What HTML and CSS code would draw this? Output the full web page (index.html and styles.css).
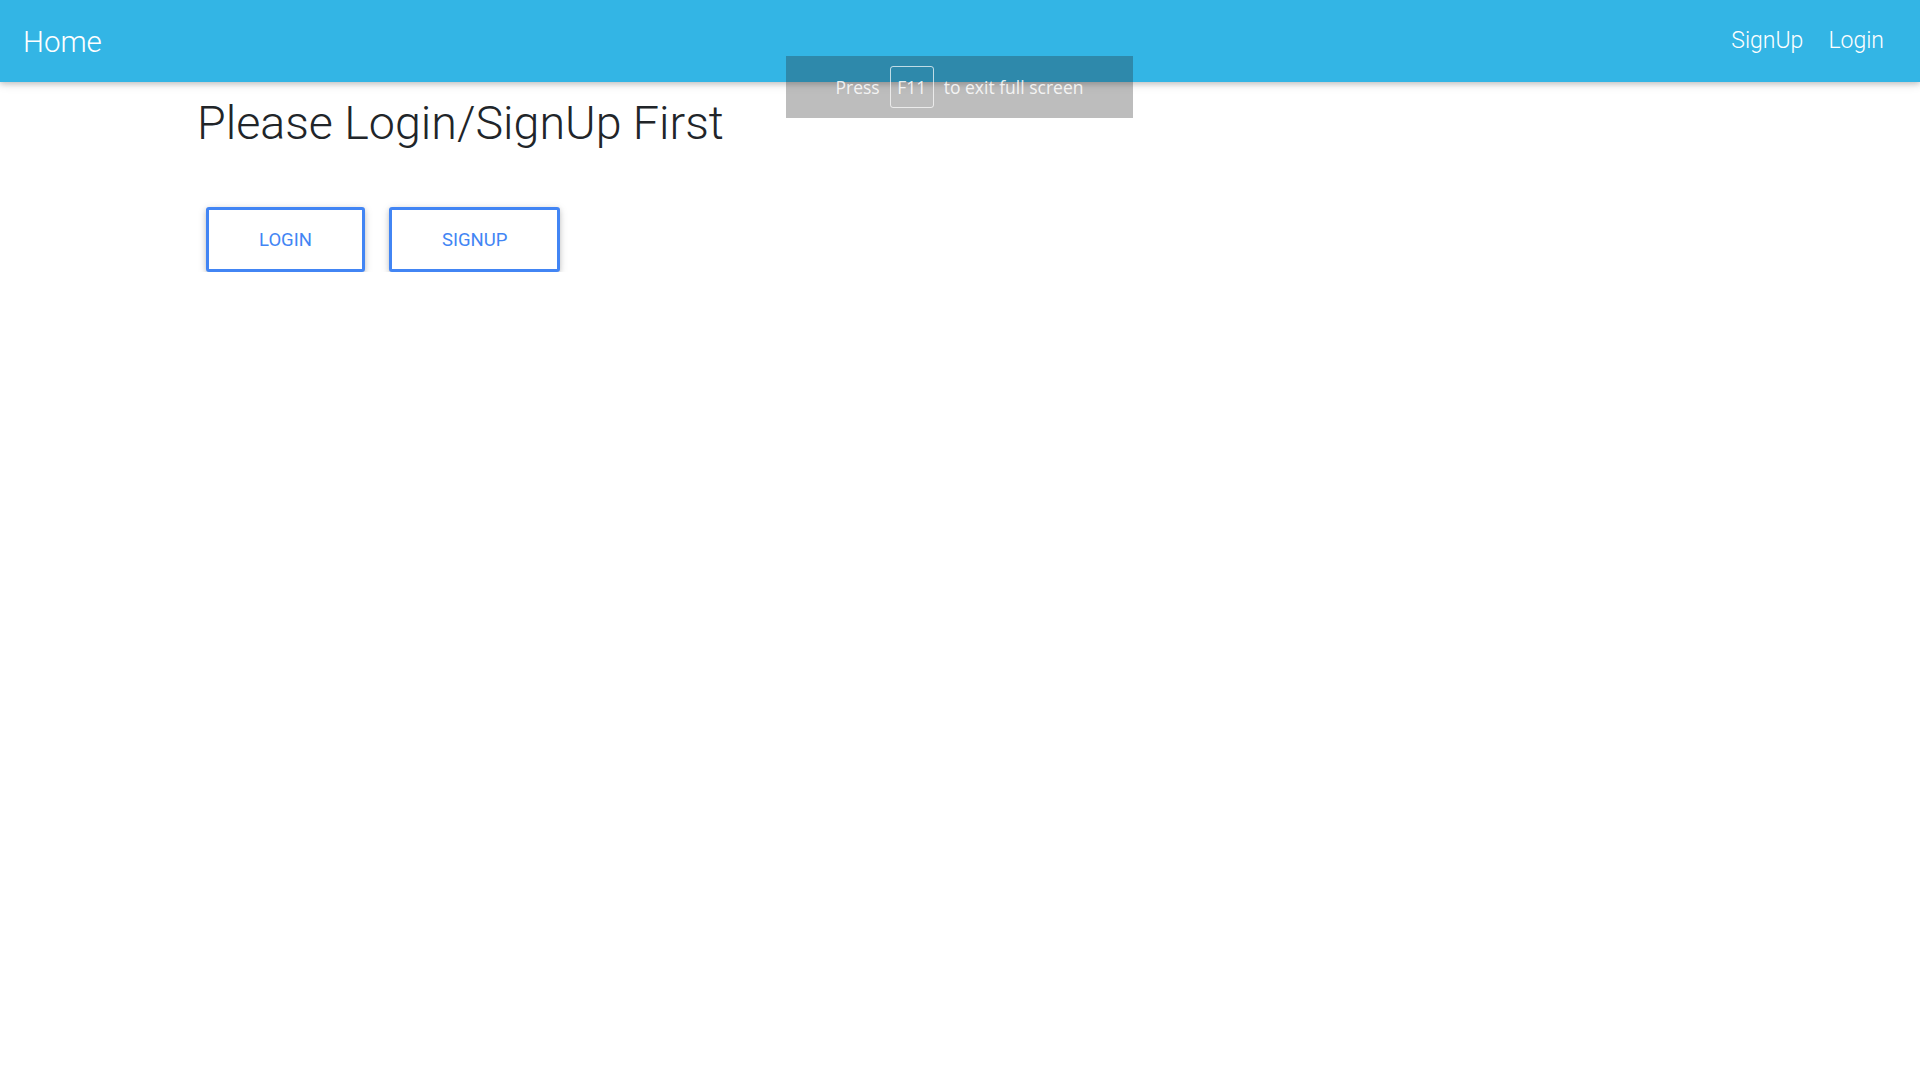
FILE: index.html
```html
<!DOCTYPE html>
<html>
<head>
<meta charset="utf-8">
<link rel="stylesheet" href="styles.css">
</head>
<body>
<nav class="navbar">
  <a class="brand">Home</a>
  <div class="nav-links">
    <a class="nav-link">SignUp</a>
    <a class="nav-link">Login</a>
  </div>
</nav>
<main class="main">
  <h1 class="title">Please Login/SignUp First</h1>
  <div class="actions">
    <button class="btn">LOGIN</button>
    <button class="btn">SIGNUP</button>
  </div>
</main>
<div class="fs-toast">
  <span>Press</span>
  <span class="key">F11</span>
  <span>to exit full screen</span>
</div>
</body>
</html>
```
FILE: styles.css
```css
* { box-sizing: border-box; }
html, body { margin: 0; padding: 0; background: #fff; }
body { font-family: Roboto, "Noto Sans", sans-serif; color: #212529; }

.navbar {
  height: 82px;
  background: #33b5e5;
  display: flex;
  align-items: center;
  justify-content: space-between;
  padding: 0 36px 0 23px;
  box-shadow: 0 2px 5px 0 rgba(0,0,0,0.16), 0 2px 10px 0 rgba(0,0,0,0.12);
  position: relative;
  z-index: 1;
}
.brand {
  color: #fff;
  font-size: 29.5px;
  font-weight: 300;
  margin-top: 1px;
}
.nav-links { display: flex; gap: 25px; margin-top: -2px; }
.nav-link {
  color: #fff;
  font-size: 23px;
  font-weight: 300;
}

.main { padding-left: 197px; }
.title {
  margin: 14px 0 0 0;
  font-size: 46.6px;
  font-weight: 300;
  line-height: 55px;
  color: #212529;
}
.actions {
  display: flex;
  gap: 24px;
  margin-top: 56px;
  padding-left: 9px;
}
.btn {
  height: 65px;
  padding: 0 50px;
  border: 3px solid #4285f4;
  border-radius: 3px;
  background: #fff;
  color: #4285f4;
  font-family: Roboto, sans-serif;
  font-size: 18.5px;
  font-weight: 400;
  box-shadow: 0 2px 5px 0 rgba(0,0,0,0.16), 0 2px 10px 0 rgba(0,0,0,0.12);
}

.fs-toast {
  position: absolute;
  left: 786px;
  top: 56px;
  width: 347px;
  height: 62px;
  background: rgba(35,35,35,0.3);
  z-index: 5;
  display: flex;
  align-items: center;
  justify-content: center;
  gap: 10px;
  color: rgba(255,255,255,0.85);
  font-family: "Open Sans", sans-serif;
  font-size: 17.5px;
}
.key {
  border: 1.5px solid rgba(255,255,255,0.7);
  border-radius: 3px;
  height: 42px;
  width: 44px;
  display: flex;
  align-items: center;
  justify-content: center;
}
```
